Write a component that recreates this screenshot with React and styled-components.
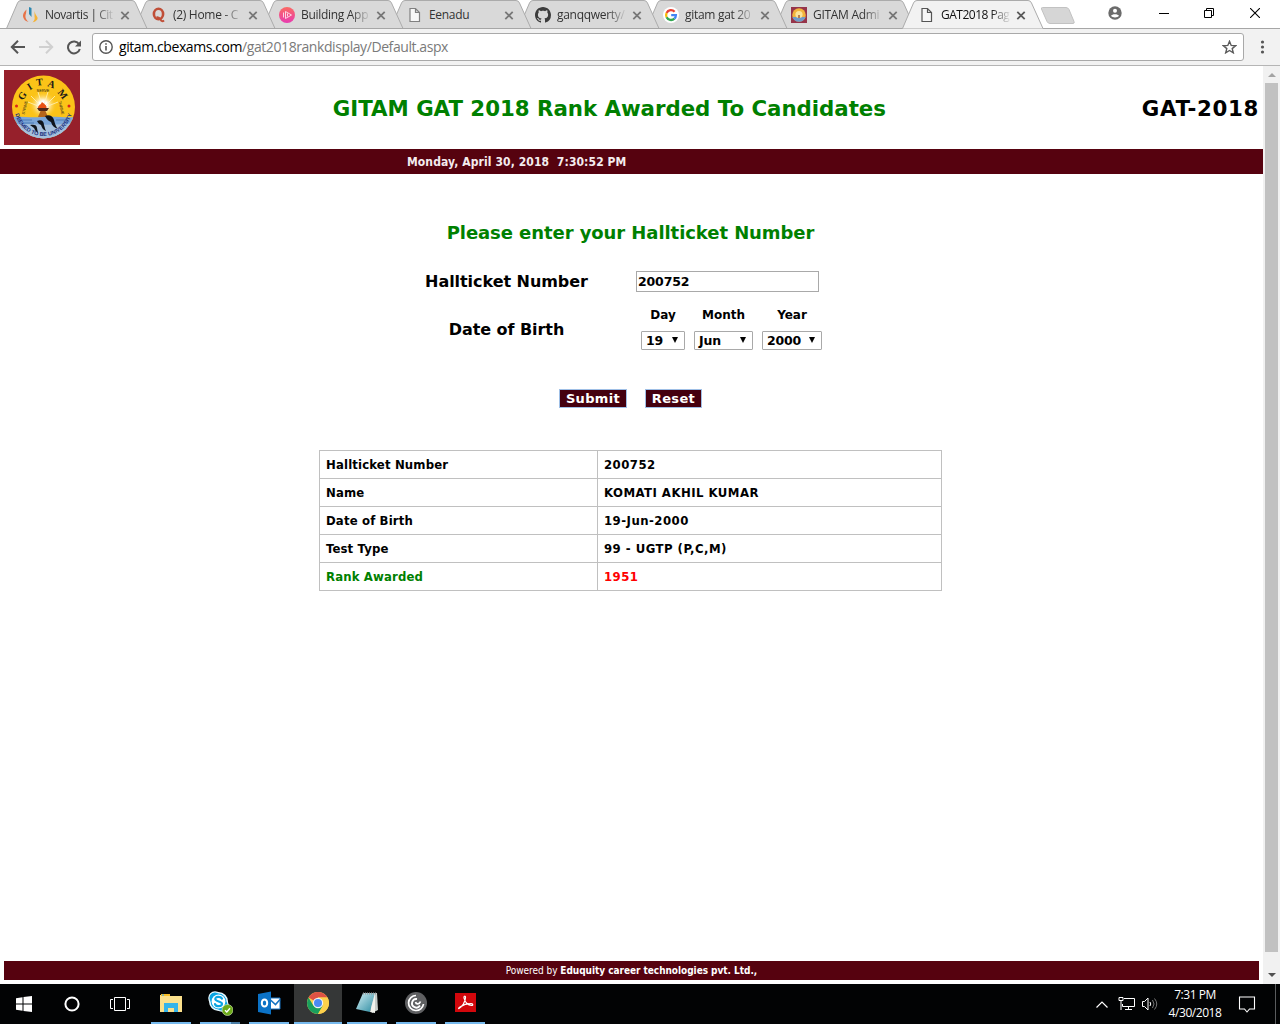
import React from "react";
import styled, { createGlobalStyle } from "styled-components";

const Global = createGlobalStyle`
  * { box-sizing: border-box; }
  html, body { margin: 0; padding: 0; background: #fff; overflow: hidden; }
`;

const uiFont = `"Open Sans", "Noto Sans", sans-serif`;
const narrowFont = `"DejaVu Sans Condensed", "DejaVu Sans", sans-serif`;
const wideFont = `"DejaVu Sans", sans-serif`;
const maroon = "#56020f";

const Screen = styled.div`
  width: 1280px;
  height: 1024px;
  display: flex;
  flex-direction: column;
  font-family: ${narrowFont};
  color: #000;
`;

/* ---------- browser chrome ---------- */
const TabStrip = styled.div`
  height: 29px;
  display: flex;
  padding-left: 6px;
  background: #fff;
  box-shadow: inset 0 -1px 0 #a6a6a6;
`;
const TabBox = styled.div`
  position: relative;
  z-index: ${(p) => p.$z};
  width: 142px;
  height: 29px;
  margin-right: -14px;
  padding: 1px 9px 0 17px;
  display: flex;
  align-items: center;
  flex: none;
`;
const TabShape = styled.svg`
  position: absolute;
  left: 0;
  top: 0;
  z-index: -1;
`;
const TabIcon = styled.span`
  width: 16px;
  height: 16px;
  display: flex;
  flex: none;
  svg { display: block; }
`;
const TabTitle = styled.span`
  width: 70px;
  margin-left: 6px;
  white-space: nowrap;
  font: 12px/18px ${uiFont};
  letter-spacing: ${(p) => p.$ls || "-0.3px"};
  color: ${(p) => (p.$active ? "#111" : "#333")};
  mask-image: linear-gradient(90deg, #000 50px, transparent 70px);
`;
const FullTabTitle = styled(TabTitle)`
  mask-image: none;
`;
const CloseMark = styled.svg`
  margin-left: 5px;
  flex: none;
`;
const NewTab = styled.svg`
  margin: 6px 0 0 10px;
  flex: none;
`;
const WindowButtons = styled.div`
  margin-left: auto;
  display: flex;
  height: 26px;
  align-items: center;
`;
const WindowButton = styled.span`
  width: ${(p) => p.$w}px;
  display: flex;
  justify-content: center;
`;
const Toolbar = styled.div`
  height: 37px;
  display: flex;
  align-items: center;
  background: #f2f2f2;
  border-bottom: 1px solid #b5b5b5;
  padding: 0 9px 0 10px;
`;
const ToolIcon = styled.svg`
  flex: none;
  margin-right: ${(p) => p.$gap}px;
`;
const UrlBar = styled.div`
  flex: 1;
  height: 28px;
  display: flex;
  align-items: center;
  background: #fff;
  border: 1px solid #a9a9a9;
  border-radius: 3px;
  padding: 0 6px;
`;
const UrlText = styled.span`
  flex: 1;
  margin-left: 6px;
  font: 14px/20px ${uiFont};
  letter-spacing: -0.42px;
  color: #7a7a7a;
  b { font-weight: 400; color: #000; }
`;

/* ---------- page ---------- */
const Viewport = styled.div`
  flex: 1;
  display: flex;
  min-height: 0;
`;
const Page = styled.main`
  width: 1263px;
  display: flex;
  flex-direction: column;
  background: #fff;
`;
const Scrollbar = styled.div`
  width: 17px;
  background: #f1f1f1;
  display: flex;
  flex-direction: column;
  align-items: center;
`;
const ScrollArrow = styled.svg`
  height: 17px;
  flex: none;
`;
const ScrollThumb = styled.div`
  width: 13px;
  height: 869px;
  background: #c1c1c1;
  margin-bottom: 15px;
`;
const Masthead = styled.header`
  height: 83px;
  display: flex;
  align-items: center;
  justify-content: space-between;
  padding: 0 4px;
`;
const Logo = styled.svg`
  flex: none;
`;
const Heading = styled.h1`
  margin: 2px ${(p) => p.$mr || 0}px 0 0;
  font-family: ${wideFont};
  font-weight: bold;
  font-size: 21.33px;
  line-height: 28px;
  white-space: nowrap;
  letter-spacing: ${(p) => p.$ls};
  color: ${(p) => p.$color};
`;
const DateBar = styled.div`
  height: 25px;
  background: ${maroon};
  color: #f4ecee;
  font-weight: bold;
  font-size: 12px;
  line-height: 26px;
  padding-left: 407px;
  white-space: pre;
  letter-spacing: 0.1px;
`;
const Prompt = styled.h2`
  margin: 47px 0 0;
  width: 1261px;
  text-align: center;
  font-family: ${wideFont};
  font-size: 18px;
  line-height: 24px;
  letter-spacing: -0.07px;
  color: #008000;
`;
const Form = styled.form`
  display: flex;
  flex-direction: column;
  margin: 0;
  font-family: ${wideFont};
`;
const FormRow = styled.div`
  display: flex;
  align-items: center;
  height: ${(p) => p.$h}px;
  margin-top: ${(p) => p.$top}px;
`;
const Label = styled.label`
  width: 217px;
  margin-left: 398px;
  margin-right: 21px;
  padding-top: ${(p) => p.$pt || 0}px;
  text-align: center;
  font-weight: bold;
  font-size: 16px;
  line-height: 20px;
  letter-spacing: -0.05px;
`;
const NumberInput = styled.input`
  width: 183px;
  height: 21px;
  border: 1px solid #a9a9a9;
  padding: 0 1px;
  font: bold 12.5px ${wideFont};
  letter-spacing: -0.15px;
`;
const DateFields = styled.div`
  display: flex;
  gap: 9px;
  margin-left: 5px;
`;
const DateField = styled.div`
  width: ${(p) => p.$w}px;
  display: flex;
  flex-direction: column;
  align-items: center;
  gap: 7px;
  padding-top: 1px;
  font-weight: bold;
  font-size: 12px;
  line-height: 18px;
`;
const SelectBox = styled.div`
  width: 100%;
  height: 19px;
  display: flex;
  align-items: center;
  justify-content: space-between;
  border: 1px solid #a9a9a9;
  border-radius: 1px;
  padding: 0 6px 0 4px;
  font-size: 12.5px;
  letter-spacing: -0.2px;
  svg { margin-bottom: 1px; }
`;
const Buttons = styled.div`
  display: flex;
  gap: 18px;
  margin: 39px 0 0 559px;
`;
const FormButton = styled.button`
  width: ${(p) => p.$w}px;
  height: 19px;
  padding: 0;
  border: 1px solid #9fbfe6;
  background: #45000f;
  color: #fff;
  font: bold 13px/17px ${wideFont};
  letter-spacing: 0.35px;
`;
const ResultTable = styled.table`
  margin: 42px 0 0 319px;
  width: 623px;
  border-collapse: collapse;
  table-layout: fixed;
  font-weight: bold;
  font-size: 13px;
`;
const Cell = styled.td`
  width: ${(p) => p.$w}px;
  height: 28px;
  border: 1px solid #c0c0c0;
  padding: 0 6px;
  line-height: 18px;
  letter-spacing: ${(p) => p.$ls}px;
  color: ${(p) => p.$color || "#000"};
`;
const Footer = styled.footer`
  margin: auto 4px 4px;
  height: 19px;
  background: ${maroon};
  color: #fff;
  text-align: center;
  font-size: 10px;
  line-height: 19px;
  letter-spacing: -0.04px;
`;

/* ---------- taskbar ---------- */
const Taskbar = styled.div`
  height: 40px;
  background: #020304;
  display: flex;
`;
const TaskCell = styled.div`
  width: 48px;
  height: 40px;
  flex: none;
  display: flex;
  align-items: center;
  justify-content: center;
  margin-left: ${(p) => p.$ml || 0}px;
  background: ${(p) => (p.$active ? "#353737" : "transparent")};
`;
const RunningCell = styled(TaskCell)`
  flex-direction: column;
  justify-content: flex-end;
`;
const TaskGlyph = styled.div`
  height: 38px;
  display: flex;
  align-items: center;
`;
const Underline = styled.div`
  width: ${(p) => (p.$full ? 48 : 40)}px;
  height: 2px;
  background: ${(p) => (p.$split ? "linear-gradient(90deg,#76b9ed 31px,#4a7da5 31px)" : "#76b9ed")};
`;
const Tray = styled.div`
  margin-left: auto;
  display: flex;
  align-items: center;
  padding-right: 4px;
`;
const TrayIcon = styled.svg`
  flex: none;
  margin-right: ${(p) => p.$gap}px;
`;
const Clock = styled.div`
  width: 62px;
  text-align: center;
  font: 12px/18px ${uiFont};
  letter-spacing: -0.45px;
  color: #fff;
`;
const Peek = styled.div`
  width: 1px;
  height: 40px;
  margin-left: 15px;
  background: #5a5c5e;
`;

/* ---------- drawings ---------- */
const PageIcon = ({ c = "#808080" }) => (
  <svg width="16" height="16" viewBox="0 0 16 16" fill="#f7f7f7" stroke={c} strokeWidth="1.200">
    <path d="M3 1.500h5.500l4 4v9h-9.500z M8.500 1.500v4h4" />
  </svg>
);
const NovartisIcon = () => (
  <svg width="16" height="16" viewBox="1 0 16 16">
    <path d="M4.500 2.500C1 6 0 9 2 12c1 1.800 3 2.500 4.500 3C3 12 3 9 4 6.500z" fill="#e87246" />
    <path d="M7 0l2.500 1v9L7 7z" fill="#2c87b0" />
    <path d="M12.500 4c.5 3 2 4.500 3 6.500.5 2.500-2 4-5 5 2-2 2.500-3.500 2-6z" fill="#f5b335" />
  </svg>
);
const QuoraIcon = () => (
  <svg width="16" height="16" viewBox="0 0 16 16" fill="none" stroke="#c04f38">
    <ellipse cx="7.500" cy="7" rx="4.600" ry="5.300" strokeWidth="2.600" />
    <path d="M5.500 10.300c2-.6 3 .4 4 2.200s2 2.200 3.600 1" strokeWidth="1.900" />
  </svg>
);
const PlayIcon = () => (
  <svg width="16" height="16" viewBox="0 0 16 16">
    <defs><linearGradient id="pk" x2="0" y2="1"><stop stopColor="#fb6a63" /><stop offset="1" stopColor="#e83bb0" /></linearGradient></defs>
    <circle cx="8" cy="8" r="8" fill="url(#pk)" />
    <path d="M4.500 5.500v5M6.500 4.500l6 3.500-6 3.500zM8.500 6.500v3" fill="none" stroke="#ffe3ee" strokeWidth=".9" />
  </svg>
);
const GithubIcon = () => (
  <svg width="16" height="16" viewBox="0 0 16 16" fill="#3c3c3c">
    <path d="M8 0C3.580 0 0 3.580 0 8c0 3.540 2.290 6.530 5.470 7.590.4.070.55-.17.55-.38 0-.19-.01-.82-.01-1.490-2.010.37-2.530-.49-2.690-.94-.09-.23-.48-.94-.82-1.130-.28-.15-.68-.52-.01-.53.63-.01 1.080.58 1.230.82.72 1.210 1.870.87 2.330.66.070-.52.28-.87.51-1.070-1.780-.2-3.640-.89-3.640-3.950 0-.87.31-1.590.82-2.150-.08-.2-.36-1.020.08-2.120 0 0 .67-.21 2.200.82.64-.18 1.320-.27 2-.27s1.360.09 2 .27c1.530-1.040 2.200-.82 2.200-.82.44 1.100.16 1.920.08 2.120.51.56.82 1.270.82 2.150 0 3.070-1.870 3.750-3.650 3.950.29.25.54.73.54 1.480 0 1.070-.01 1.930-.01 2.200 0 .21.15.46.55.38A8.010 8.010 0 0 0 16 8c0-4.420-3.580-8-8-8z" />
  </svg>
);
const GoogleIcon = () => (
  <svg width="16" height="16" viewBox="0 0 16 16" fill="none" strokeWidth="2.300">
    <circle cx="8" cy="8" r="8" fill="#fff" />
    <path d="M11.600 4.700A4.900 4.900 0 0 0 3.600 5.900" stroke="#e94335" />
    <path d="M3.600 5.900a4.900 4.900 0 0 0 0 4.300" stroke="#fabb05" />
    <path d="M3.600 10.200a4.900 4.900 0 0 0 7.800 1.400" stroke="#34a853" />
    <path d="M11.400 11.600A4.900 4.900 0 0 0 12.900 8.200H8.200" stroke="#4285f4" />
  </svg>
);
const GitamTabIcon = () => (
  <svg width="16" height="16" viewBox="0 0 16 16">
    <path fill="#96344a" d="M0 0h16v16H0z" />
    <circle cx="8" cy="8" r="6.800" fill="#f2b53c" />
    <path d="M1.500 10h13a6.800 6.800 0 0 1-13 0z" fill="#6f9bcc" />
    <circle cx="8" cy="7.500" r="3.600" fill="#fbe49a" />
    <path d="M7.200 8h1.600v3H7.200z" fill="#a8683c" />
  </svg>
);

const ringLetters = [
  ["G", 18, 25.5, -58], ["I", 25.5, 16.5, -32], ["T", 35.5, 12, -6], ["A", 47.500, 14, 20], ["M", 59, 24, 52],
];

const GitamLogo = () => (
  <Logo width="76" height="75" viewBox="0 0 76 75">
    <defs>
      <clipPath id="seal"><circle cx="39.500" cy="37" r="31.500" /></clipPath>
      <path id="lowerArc" d="M10.600 41A29.200 29.200 0 0 0 68.400 41" />
      <radialGradient id="sun"><stop offset=".3" stopColor="#fff" /><stop offset="1" stopColor="#fbc318" stopOpacity="0" /></radialGradient>
    </defs>
    <path fill="#96202b" d="M0 0h76v75H0z" />
    <circle cx="39.500" cy="37" r="31.500" fill="#fbc318" />
    <g clipPath="url(#seal)">
      <circle cx="39" cy="35" r="14" fill="url(#sun)" />
      <path d="M39 38L24 32M39 38L27 26M39 38L34 22M39 38L44 22M39 38L51 26M39 38L54 32" stroke="#fff3c0" strokeWidth=".8" />
      <path d="M6 47c10-1 20 1 33 0s22 1 33 0v25H6z" fill="#7ba6d8" />
      <path d="M6 55c14-3 30 2 66-2v20H6z" fill="#a5c0dd" />
      <path d="M14 50h14M20 53h10M52 50h12" stroke="#4f7db5" strokeWidth="1" />
    </g>
    <path d="M33 38h12l-2 3h-8z" fill="#4f2718" />
    <path d="M36.500 41h5l2.500 6h-10z" fill="#b5651c" />
    <path d="M34 38c0-3 3-3 4-6 2 2 5 3 4.500 6z" fill="#e85214" />
    <path d="M41 46c4-2 8 0 9 4 .8 3 2 7 4 9-3-1-6-3-7-7-2-1-4-2-6-6zM33 51c4-2 7 0 7 4 1 3 1 4 2 6-3-1-4-3-5-6-2-1-3-2-4-4zM26 55c4-1 7 0 7 3l1 5c-2-1-3-3-4-5z" fill="#10151c" />
    <circle cx="12.500" cy="36" r="1.500" fill="#dc2418" />
    <circle cx="65" cy="36" r="1.500" fill="#dc2418" />
    <g fill="#1b1a1a" fontFamily="Liberation Serif, serif" fontWeight="bold" textAnchor="middle">
      {ringLetters.map(([l, x, y, r]) => (
        <text key={l} fontSize="10" dominantBaseline="central" transform={`translate(${x} ${y}) rotate(${r})`}>{l}</text>
      ))}
      <g fontFamily="Liberation Sans, sans-serif" fontWeight="normal" fontSize="3.800">
        <text x="39" y="22">SERVE</text>
        <text transform="translate(22 38) rotate(-78)">STRIVE</text>
        <text transform="translate(56 38) rotate(78)">THRIVE</text>
      </g>
    </g>
    <text fill="#20307d" fontFamily="Liberation Sans, sans-serif" fontWeight="bold" fontSize="5.500">
      <textPath href="#lowerArc" startOffset="50%" textAnchor="middle">DEEMED TO BE UNIVERSITY</textPath>
    </text>
  </Logo>
);

const FolderIcon = () => (
  <svg width="22" height="20" viewBox="0 0 22 20">
    <path d="M0 2h2V1h7l1 2h12v16H0z" fill="#fbe08c" />
    <path d="M1 1h9v2H1z" fill="#f5bd28" /><path d="M2 1.500h2v1.200H2z" fill="#54b3d8" />
    <path d="M4 10h14v9h-4v-4H8v4H4z" fill="#35b4ea" />
  </svg>
);
const SkypeIcon = () => (
  <svg width="26" height="26" viewBox="0 0 26 26">
    <g stroke="#e8f7fd" strokeWidth="1.600">
      <circle cx="8" cy="8" r="6" fill="#0aa5e3" /><circle cx="15" cy="15" r="6" fill="#0aa5e3" /><circle cx="11.500" cy="11.500" r="8.700" fill="#0aa5e3" />
    </g>
    <circle cx="8" cy="8" r="5.500" fill="#0aa5e3" /><circle cx="15" cy="15" r="5.500" fill="#0aa5e3" />
    <circle cx="11.500" cy="11.500" r="6.900" fill="#fff" />
    <path d="M15 8.600C13.500 6 7.900 6.300 8.300 9.200c.4 2.700 6.700 1.800 6.700 4.600 0 3.200-6.200 3-7 .3" fill="none" stroke="#0aa5e3" strokeWidth="2.200" strokeLinecap="round" />
    <circle cx="20.500" cy="20" r="5.500" fill="#6cab19" stroke="#d8ecb8" strokeWidth=".6" />
    <path d="M18 20.300l1.800 1.700 3.200-3.800" fill="none" stroke="#fff" strokeWidth="1.400" />
  </svg>
);
const OutlookIcon = () => (
  <svg width="24" height="24" viewBox="0 0 24 24">
    <path d="M12 7h11v11H12z" fill="#fff" stroke="#1675c4" strokeWidth="1" />
    <path d="M13 8.500l5.500 5 4.500-5" stroke="#1675c4" strokeWidth="1.600" fill="none" />
    <path d="M1 3l13-2.500v23L1 21z" fill="#0b72c6" />
    <ellipse cx="7.500" cy="12" rx="2.700" ry="3.600" fill="none" stroke="#fff" strokeWidth="2" />
  </svg>
);
const ChromeIcon = () => (
  <svg width="22" height="22" viewBox="0 0 22 22">
    <circle cx="11" cy="11" r="11" fill="#fcd04b" />
    <path d="M11 11L1.500 5.500A11 11 0 0 1 20.500 5.500H11z" fill="#de5245" />
    <path d="M1.500 5.500A11 11 0 0 0 11 22l5-8.500H6.300z" fill="#199f5d" />
    <path d="M11 22A11 11 0 0 0 20.500 5.500H11l5 8z" fill="#fcd04b" />
    <circle cx="11" cy="11" r="5.200" fill="#f2f2f2" /><circle cx="11" cy="11" r="4" fill="#4a8af4" />
  </svg>
);
const NotepadIcon = () => (
  <svg width="24" height="24" viewBox="0 0 24 24">
    <defs><linearGradient id="np" x2="1" y2="1"><stop stopColor="#d3eff4" /><stop offset="1" stopColor="#2b8ba1" /></linearGradient></defs>
    <path d="M9 2h13l1 17-6 3z" fill="#c6ccc9" />
    <path d="M8 2h12l-5 19-14-3z" fill="url(#np)" />
    <path d="M20 2l-5 19 5 1z" fill="#f2f3ee" />
    <path d="M8 2.500h13" stroke="#999" strokeDasharray="1 1" strokeWidth="2" />
  </svg>
);
const CitrixIcon = () => (
  <svg width="22" height="22" viewBox="0 0 22 22" fill="none" stroke="#fff">
    <circle cx="11" cy="11" r="11" fill="#5f6062" stroke="none" />
    <path d="M11 3.500a7.500 7.500 0 1 0 7.500 8.500" strokeWidth="1.700" />
    <path d="M12 7a4.300 4.300 0 1 0 3 6.500" strokeWidth="1.900" />
    <path d="M10.500 10c.5 2.500 4 2.500 5-.5" strokeWidth="1.700" />
  </svg>
);
const AcrobatIcon = () => (
  <svg width="21" height="20" viewBox="0 0 21 20">
    <path d="M0 0h21v19H0z" fill="#d2070c" />
    <path d="M4 15.500c3-1.500 6.500-7 6.500-11 0-2-2-1.500-1.500.5.800 4 4 7.500 7.500 7.500 2 0 1.500-1.800-.5-1.800-4 0-8 1.300-11 3.300-1.500 1-1.800 1.800-1 1.500z" fill="none" stroke="#fff" strokeWidth="1.200" />
  </svg>
);

const tabs = [
  { t: "Novartis | Cit", I: NovartisIcon, ls: "-0.5px" },
  { t: "(2) Home - C", I: QuoraIcon },
  { t: "Building App", I: PlayIcon },
  { t: "Eenadu", I: PageIcon, full: true },
  { t: "ganqqwerty/", I: GithubIcon },
  { t: "gitam gat 20", I: GoogleIcon },
  { t: "GITAM Admi", I: GitamTabIcon },
  { t: "GAT2018 Pag", I: PageIcon, active: true, ls: "-0.5px" },
];

const Tab = ({ tab, index }) => {
  const Title = tab.full ? FullTabTitle : TabTitle;
  return (
    <TabBox $z={tab.active ? 20 : 10 - index}>
      <TabShape width="142" height="29">
        <path
          d="M0.500 28.500L11.500 3Q12.500 .5 15 .5H126Q128.500 .5 129.500 3L141 28.500"
          fill={tab.active ? "#f2f2f2" : "#d9d9d9"}
          stroke="#ababab"
        />
        {!tab.active && <path d="M0 28.500h142" stroke="#a6a6a6" />}
      </TabShape>
      <TabIcon><tab.I c={tab.active ? "#555" : undefined} /></TabIcon>
      <Title $active={tab.active} $ls={tab.ls}>{tab.t}</Title>
      <CloseMark width="10" height="9" viewBox="-.5 0 10 9" stroke={tab.active ? "#5a5a5a" : "#777"} strokeWidth="1.800">
        <path d="M.8.800l7.400 7.400M8.200.800L.8 8.200" />
      </CloseMark>
    </TabBox>
  );
};

const results = [
  ["Hallticket Number", "200752"],
  ["Name", "KOMATI AKHIL KUMAR"],
  ["Date of Birth", "19-Jun-2000"],
  ["Test Type", "99 - UGTP (P,C,M)"],
  ["Rank Awarded", "1951", "#008000", "#ff0000"],
];

const dateFields = [
  ["Day", "19", 44],
  ["Month", "Jun", 59],
  ["Year", "2000", 60],
];

const running = [
  { I: FolderIcon },
  { I: SkypeIcon, split: true },
  { I: OutlookIcon },
  { I: ChromeIcon, active: true },
  { I: NotepadIcon },
  { I: CitrixIcon },
  { I: AcrobatIcon },
];

export default function App() {
  return (
    <Screen>
      <Global />
      <TabStrip>
        {tabs.map((tab, i) => <Tab key={tab.t} tab={tab} index={i} />)}
        <NewTab width="36" height="19" viewBox="0 0 36 19">
          <path d="M2.500 1.500H26q2 0 3 2l5 12q.8 2-1 2H10q-2 0-3-2L1.500 3q-.5-1.500 1-1.500z" fill="#d6d6d6" stroke="#c2c2c2" />
        </NewTab>
        <WindowButtons>
          <WindowButton $w={50}>
            <svg width="14" height="14" viewBox="0 0 14 14">
              <circle cx="7" cy="7" r="6.700" fill="#6b6b6b" />
              <circle cx="7" cy="4.800" r="2" fill="#fff" />
              <path d="M3 9.800c1-2.200 7-2.200 8 0-1.500 2.300-6.500 2.300-8 0z" fill="#fff" />
            </svg>
          </WindowButton>
          <WindowButton $w={48}>
            <svg width="10" height="10"><path d="M0 5.500h10" stroke="#000" /></svg>
          </WindowButton>
          <WindowButton $w={42}>
            <svg width="10" height="10" fill="none" stroke="#000"><path d="M.5 2.500h7v7h-7zM2.500 2.500v-2h7v7h-2" /></svg>
          </WindowButton>
          <WindowButton $w={50}>
            <svg width="10" height="10" stroke="#000" strokeWidth="1.100"><path d="M0 0l10 10M10 0L0 10" /></svg>
          </WindowButton>
        </WindowButtons>
      </TabStrip>
      <Toolbar>
        <ToolIcon $gap={14} width="15" height="14" viewBox="0 0 15 14" fill="none" stroke="#555" strokeWidth="2">
          <path d="M15 7H2M8 .8L1.800 7 8 13.200" />
        </ToolIcon>
        <ToolIcon $gap={13} width="15" height="14" viewBox="0 0 15 14" fill="none" stroke="#d0d0d0" strokeWidth="2">
          <path d="M0 7h13M7 .8L13.200 7 7 13.200" />
        </ToolIcon>
        <ToolIcon $gap={10} width="15" height="15" viewBox="0 0 15 15" fill="none" stroke="#555" strokeWidth="2">
          <path d="M12.100 4.200A6 6 0 1 0 12.800 9" />
          <path d="M14 .5v6H8z" fill="#555" stroke="none" />
        </ToolIcon>
        <UrlBar>
          <svg width="14" height="14" viewBox="0 0 14 14" fill="none" stroke="#555" strokeWidth="1.400">
            <circle cx="7" cy="7" r="6.200" /><path d="M7 6v4.500M7 3.300v1.500" strokeWidth="1.600" />
          </svg>
          <UrlText><b>gitam.cbexams.com</b>/gat2018rankdisplay/Default.aspx</UrlText>
          <svg width="15" height="14" viewBox="0 0 15 14" fill="none" stroke="#5a5a5a" strokeWidth="1.400">
            <path d="M7.500 1.300l1.700 4.100 4.400.3-3.400 2.900 1.100 4.200-3.800-2.300-3.800 2.300 1.100-4.200L1.400 5.700l4.400-.3z" />
          </svg>
        </UrlBar>
        <svg width="27" height="14" viewBox="0 0 27 14" fill="#555">
          <circle cx="18.500" cy="2" r="1.600" /><circle cx="18.500" cy="7" r="1.600" /><circle cx="18.500" cy="12" r="1.600" />
        </svg>
      </Toolbar>

      <Viewport>
        <Page>
          <Masthead>
            <GitamLogo />
            <Heading $color="#008000" $ls="-0.03px" $mr={3}>GITAM GAT 2018 Rank Awarded To Candidates</Heading>
            <Heading $color="#000" $ls="0.65px">GAT-2018</Heading>
          </Masthead>
          <DateBar>{"Monday, April 30, 2018  7:30:52 PM"}</DateBar>
          <Prompt>Please enter your Hallticket Number</Prompt>
          <Form>
            <FormRow $h={21} $top={26}>
              <Label>Hallticket Number</Label>
              <NumberInput defaultValue="200752" />
            </FormRow>
            <FormRow $h={45} $top={13}>
              <Label $pt={4}>Date of Birth</Label>
              <DateFields>
                {dateFields.map(([name, value, w]) => (
                  <DateField key={name} $w={w}>
                    {name}
                    <SelectBox>
                      {value}
                      <svg width="6" height="6"><path d="M0 0h6L3 6z" /></svg>
                    </SelectBox>
                  </DateField>
                ))}
              </DateFields>
            </FormRow>
            <Buttons>
              <FormButton type="button" $w={68}>Submit</FormButton>
              <FormButton type="button" $w={57}>Reset</FormButton>
            </Buttons>
          </Form>
          <ResultTable>
            <tbody>
              {results.map(([k, v, kc, vc]) => (
                <tr key={k}>
                  <Cell $w={278} $ls={0.15} $color={kc}>{k}</Cell>
                  <Cell $w={344} $ls={0.48} $color={vc}>{v}</Cell>
                </tr>
              ))}
            </tbody>
          </ResultTable>
          <Footer>Powered by <b>Eduquity career technologies pvt. Ltd.,</b></Footer>
        </Page>
        <Scrollbar>
          <ScrollArrow width="8" viewBox="0 0 8 17"><path d="M0 11h8L4 7z" fill="#a3a3a3" /></ScrollArrow>
          <ScrollThumb />
          <ScrollArrow width="8" viewBox="0 0 8 17"><path d="M0 6h8l-4 4z" fill="#505050" /></ScrollArrow>
        </Scrollbar>
      </Viewport>

      <Taskbar>
        <TaskCell>
          <svg width="16" height="16" viewBox="0 0 16 16" fill="#fff">
            <path d="M0 2.200L6.500 1.300v6.200H0zM7.500 1.100L16 0v7.500H7.500zM0 8.500h6.500v6.200L0 13.800zM7.500 8.500H16V16l-8.500-1.100z" />
          </svg>
        </TaskCell>
        <TaskCell>
          <svg width="16" height="16"><circle cx="8" cy="8" r="6.600" fill="none" stroke="#fff" strokeWidth="2" /></svg>
        </TaskCell>
        <TaskCell>
          <svg width="20" height="14" fill="none" stroke="#fff"><path d="M4.500.5h11v13h-11zM3 2.500H.5v9H3M17 2.500h2.500v9H17" /></svg>
        </TaskCell>
        {running.map(({ I, active, split }, i) => (
          <RunningCell key={i} $ml={i === 0 ? 3 : 1} $active={active}>
            <TaskGlyph><I /></TaskGlyph>
            <Underline $full={active} $split={split} />
          </RunningCell>
        ))}
        <Tray>
          <TrayIcon $gap={10} width="12" height="7" fill="none" stroke="#fff" strokeWidth="1.200"><path d="M.5 6.500L6 1l5.500 5.500" /></TrayIcon>
          <TrayIcon $gap={7} width="17" height="14" fill="none" stroke="#fff">
            <path d="M6 1.500h10.500v8H4.500V7M7 12.500h7M10.500 10v3M1 .5h4v3H1zM3 4v9" />
          </TrayIcon>
          <TrayIcon $gap={6} width="16" height="14" fill="none" stroke="#fff">
            <path d="M.5 4.500h2l3.500-3.500v12L2.500 9.500h-2z" /><path d="M8 5q1.500 2 0 4" /><path d="M10.500 3q3 4 0 8M12.500 1.500q4.500 5.500 0 11" stroke="#777" />
          </TrayIcon>
          <Clock>7:31 PM<br />4/30/2018</Clock>
          <TrayIcon $gap={0} width="34" height="17" fill="none" stroke="#fff" strokeWidth="1.100">
            <path d="M13.500 1h15v12h-5l-2.500 3-2.500-3h-5z" />
          </TrayIcon>
          <Peek />
        </Tray>
      </Taskbar>
    </Screen>
  );
}
